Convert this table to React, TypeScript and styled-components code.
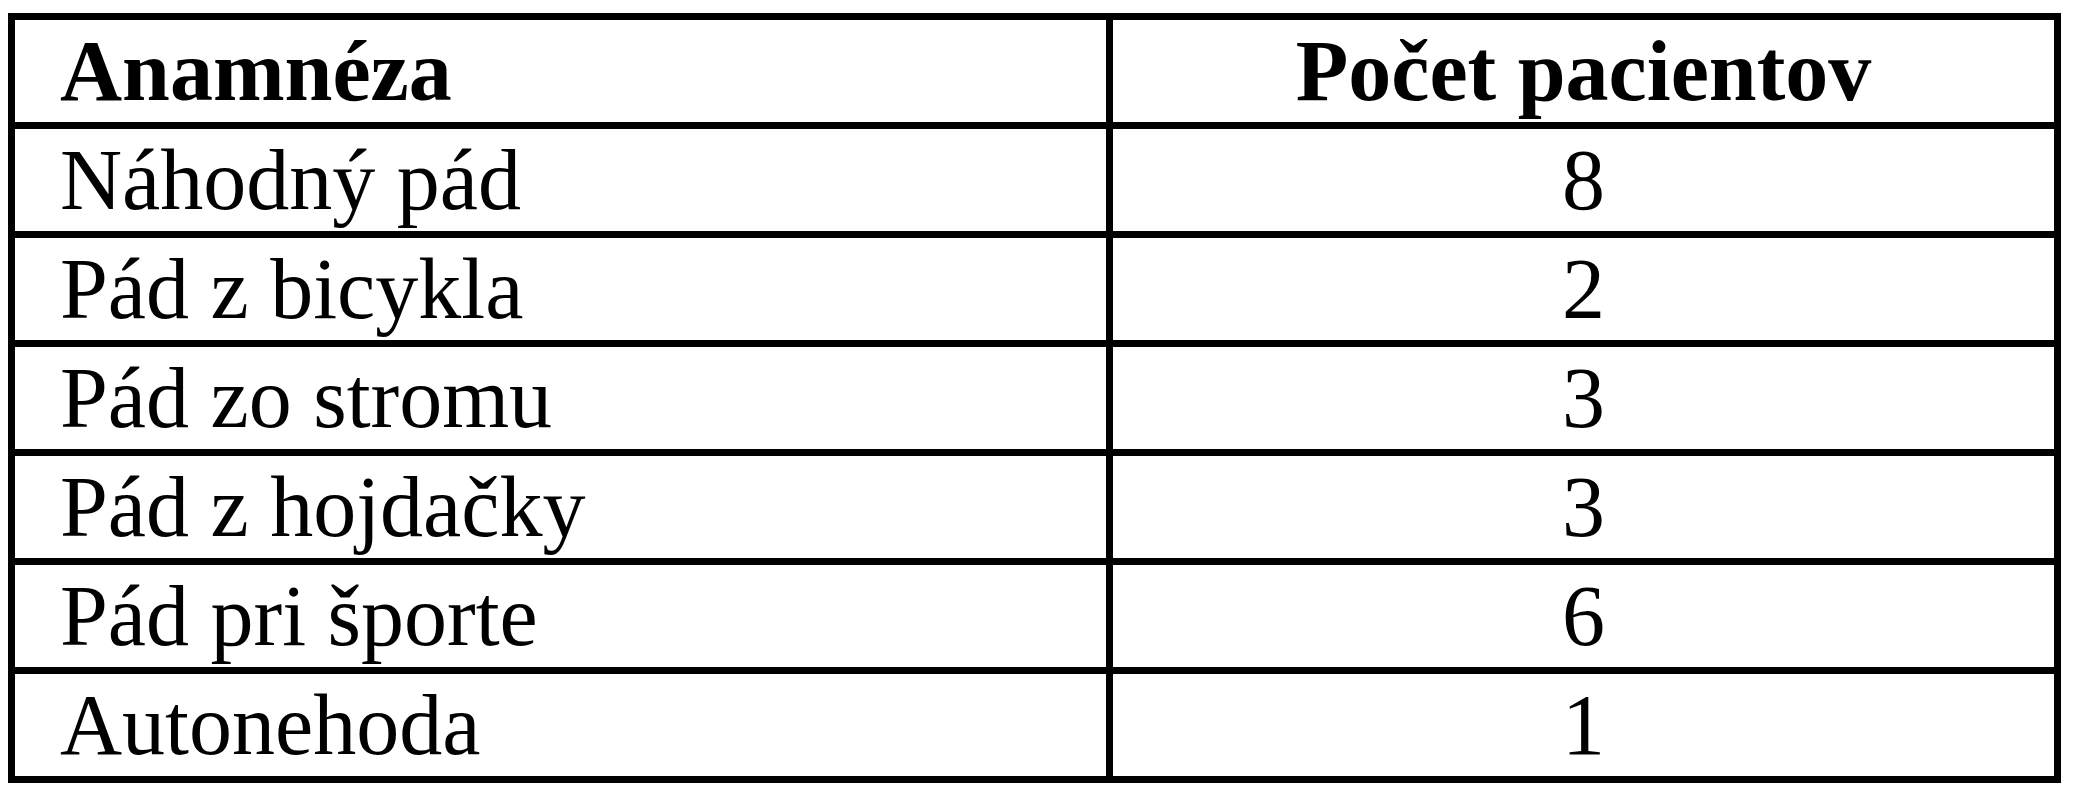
import React from "react";
import styled, { createGlobalStyle } from "styled-components";

const rows = [
  { label: "Náhodný pád", count: 8 },
  { label: "Pád z bicykla", count: 2 },
  { label: "Pád zo stromu", count: 3 },
  { label: "Pád z hojdačky", count: 3 },
  { label: "Pád pri športe", count: 6 },
  { label: "Autonehoda", count: 1 },
];

const GlobalStyle = createGlobalStyle`
  html, body {
    margin: 0;
    padding: 0;
    background: #ffffff;
  }
`;

const App = () => {
  return (
    <>
      <GlobalStyle />
      <Page>
        <Table>
          <Cell $head>Anamnéza</Cell>
          <Cell $head $center>Počet pacientov</Cell>
          {rows.map((r) => (
            <React.Fragment key={r.label}>
              <Cell>{r.label}</Cell>
              <Cell $center>{r.count}</Cell>
            </React.Fragment>
          ))}
        </Table>
      </Page>
    </>
  );
};

const Page = styled.div`
  padding: 13px 0 0 8px;
  box-sizing: border-box;
`;

// grid with black background: the gaps and padding draw the rules
const Table = styled.div`
  display: grid;
  grid-template-columns: 1091px 941px;
  grid-auto-rows: 102px;
  gap: 7px;
  padding: 7px;
  width: 2053px;
  box-sizing: border-box;
  background-color: #000;
`;

const Cell = styled.div<{ $head?: boolean; $center?: boolean }>`
  background-color: #fff;
  color: #000;
  font-family: "Liberation Serif", "Times New Roman", serif;
  font-size: 86px;
  line-height: 102px;
  font-weight: ${(p) => (p.$head ? 700 : 400)};
  text-align: ${(p) => (p.$center ? "center" : "left")};
  padding: ${(p) => (p.$center ? "0" : "0 0 0 45px")};
  white-space: nowrap;
  overflow: hidden;
`;

export default App;
